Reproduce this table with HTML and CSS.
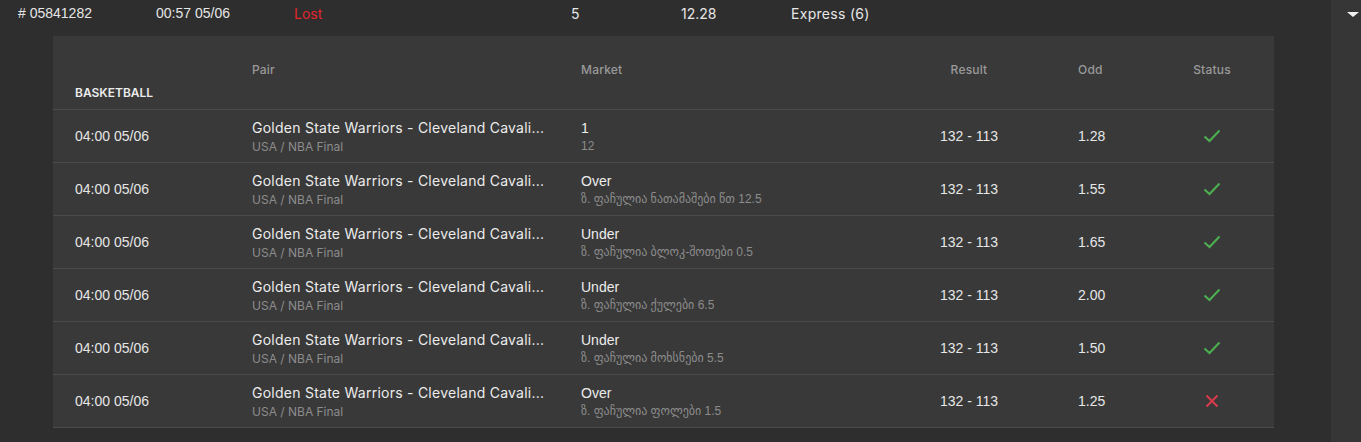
FILE: index.html
```html
<!DOCTYPE html>
<html lang="en">
<head>
    <meta charset="UTF-8">
    <meta name="viewport" content="width=device-width, initial-scale=1.0">
    <title>Bet history</title>
    <link rel="stylesheet" href="styles.css">
</head>
<body>
<div class="layout">
    <div class="history">
        <div class="bet-row">
            <span class="bet-id">#&nbsp;05841282</span>
            <span class="bet-date">00:57 05/06</span>
            <span class="bet-status lost">Lost</span>
            <span class="bet-count">5</span>
            <span class="bet-odd">12.28</span>
            <span class="bet-type">Express (6)</span>
        </div>

        <div class="details">
            <div class="grid head">
                <div class="sport">BASKETBALL</div>
                <div class="label">Pair</div>
                <div class="label">Market</div>
                <div class="label center">Result</div>
                <div class="label">Odd</div>
                <div class="label center">Status</div>
            </div>
            <div id="events">
                <!-- rows are added by the script below -->
            </div>
        </div>
    </div>
    <div class="side">
        <span class="arrow"></span>
    </div>
</div>

<script>
    var events = [
        { market: "1", info: "12", odd: "1.28", won: true },
        { market: "Over", info: "ზ. ფაჩულია ნათამაშები წთ 12.5", odd: "1.55", won: true },
        { market: "Under", info: "ზ. ფაჩულია ბლოკ-შოთები 0.5", odd: "1.65", won: true },
        { market: "Under", info: "ზ. ფაჩულია ქულები 6.5", odd: "2.00", won: true },
        { market: "Under", info: "ზ. ფაჩულია მოხსნები 5.5", odd: "1.50", won: true },
        { market: "Over", info: "ზ. ფაჩულია ფოლები 1.5", odd: "1.25", won: false }
    ];

    var checkIcon = '<svg width="18" height="14" viewBox="0 0 18 14"><path d="M1.5 7.5 L6.5 12 L16.5 1.5" fill="none" stroke="#4cb050" stroke-width="2"/></svg>';
    var crossIcon = '<svg width="14" height="14" viewBox="0 0 14 14"><path d="M1.5 1.5 L12.5 12.5 M12.5 1.5 L1.5 12.5" fill="none" stroke="#d93a4c" stroke-width="2"/></svg>';

    var list = document.getElementById('events');

    events.forEach(function(ev) {
        var row = document.createElement('div');
        row.className = 'grid event';
        row.innerHTML = `
            <div class="time">04:00 05/06</div>
            <div class="pair">
                <div class="teams">Golden State Warriors - Cleveland Cavali...</div>
                <div class="sub">USA / NBA Final</div>
            </div>
            <div class="market">
                <div class="pick">${ev.market}</div>
                <div class="sub geo">${ev.info}</div>
            </div>
            <div class="score center">132 - 113</div>
            <div class="odd">${ev.odd}</div>
            <div class="status center">${ev.won ? checkIcon : crossIcon}</div>
        `;
        list.appendChild(row);
    });
</script>
</body>
</html>
```

FILE: styles.css
```css
body {
    margin: 0;
    background-color: #2e2e2e;
    color: #e6e6e6;
    font-family: "Liberation Sans", Arial, sans-serif;
    font-size: 14px;
}
.layout {
    display: flex;
    height: 442px;
    overflow: hidden;
}
.history {
    flex: 1;
}
.side {
    width: 30px;
    background-color: #363636;
    position: relative;
}
.arrow {
    position: absolute;
    top: 12px;
    left: 16px;
    border-left: 6px solid transparent;
    border-right: 6px solid transparent;
    border-top: 5px solid #f2f2f2;
}

/* bet summary line */
.bet-row {
    display: flex;
    align-items: center;
    height: 26px;
    padding: 0 0 10px 18px;
}
.bet-row span {
    white-space: nowrap;
}
.bet-id {
    width: 138px;
}
.bet-date {
    width: 138px;
}
.bet-status {
    width: 277px;
    font-family: Inter, "Noto Sans", sans-serif;
}
.lost {
    color: #e2262c;
}
.bet-count {
    width: 110px;
    font-family: Inter, "Noto Sans", sans-serif;
}
.bet-odd {
    width: 110px;
    font-family: Inter, "Noto Sans", sans-serif;
}
.bet-type {
    font-family: Inter, "Noto Sans", sans-serif;
    letter-spacing: 0.3px;
}

/* event table */
.details {
    background-color: #393939;
    margin: 0 57px 0 53px;
}
.grid {
    display: grid;
    grid-template-columns: 177px 329px 319px 138px 112px 124px;
    padding-left: 22px;
    border-bottom: 1px solid #4b4b4b;
    align-items: center;
}
.head {
    height: 73px;
    align-items: start;
}
.head .label {
    padding-top: 26px;
    color: #9a9a9a;
    font-family: Inter, "Noto Sans", sans-serif;
    font-size: 12px;
    font-weight: 500;
    letter-spacing: 0.2px;
}
.head .sport {
    padding-top: 49px;
    font-family: Inter, "Noto Sans", sans-serif;
    font-size: 12px;
    font-weight: 600;
    color: #ececec;
}
.head .label:nth-child(5) {
    padding-left: 40px;
}
.center {
    text-align: center;
}
.event {
    height: 52px;
}
.teams {
    font-family: Inter, "Noto Sans", sans-serif;
    letter-spacing: 0.25px;
    white-space: nowrap;
    color: #ececec;
}
.sub {
    margin-top: 3px;
    font-family: Inter, "Noto Sans", sans-serif;
    font-size: 12px;
    color: #8c8c8c;
}
.geo {
    font-family: "Liberation Sans", "DejaVu Sans", sans-serif;
}
.pick {
    color: #ececec;
}
.odd {
    padding-left: 40px;
}
.status svg {
    display: block;
    margin: 0 auto;
}
```
